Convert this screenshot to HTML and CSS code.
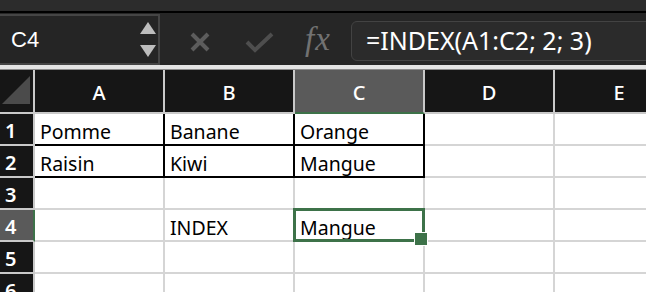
FILE: index.html
```html
<!DOCTYPE html>
<html lang="fr">
<head>
<meta charset="UTF-8">
<meta name="viewport" content="width=device-width, initial-scale=1.0">
<title>Feuille de calcul</title>
<link rel="stylesheet" href="styles.css">
</head>
<body>

<div class="titlebar"></div>

<div class="toolbar">
  <div class="namebox">
    <span class="cellref">C4</span>
    <div class="stepper">
      <svg width="16" height="12" viewBox="0 0 16 12"><polygon points="8,0 16,12 0,12" fill="#bdbdbd"/></svg>
      <svg width="16" height="12" viewBox="0 0 16 12"><polygon points="0,0 16,0 8,12" fill="#bdbdbd"/></svg>
    </div>
  </div>
  <div class="actions">
    <svg class="icon-cancel" width="22" height="22" viewBox="0 0 22 22">
      <path d="M3 3 L19 19 M19 3 L3 19" stroke="#5c5c5c" stroke-width="4" fill="none"/>
    </svg>
    <svg class="icon-enter" width="30" height="22" viewBox="0 0 30 22">
      <path d="M2 11 L10 19 L27 3" stroke="#4e4e4e" stroke-width="4" fill="none"/>
    </svg>
    <span class="fx">fx</span>
  </div>
  <div class="formula">=INDEX(A1:C2; 2; 3)</div>
</div>

<div class="sheet">
  <div class="corner"><svg width="30" height="30" viewBox="0 0 30 30"><polygon points="28,0 28,28 0,28" fill="#4b4b4b"/></svg></div>
  <div class="colhead">A</div>
  <div class="colhead">B</div>
  <div class="colhead active-col">C</div>
  <div class="colhead">D</div>
  <div class="colhead">E</div>

  <div class="rowhead">1</div>
  <div class="cell boxed">Pomme</div>
  <div class="cell boxed">Banane</div>
  <div class="cell boxed">Orange</div>
  <div class="cell"></div>
  <div class="cell"></div>

  <div class="rowhead">2</div>
  <div class="cell boxed">Raisin</div>
  <div class="cell boxed">Kiwi</div>
  <div class="cell boxed">Mangue</div>
  <div class="cell"></div>
  <div class="cell"></div>

  <div class="rowhead">3</div>
  <div class="cell"></div>
  <div class="cell"></div>
  <div class="cell"></div>
  <div class="cell"></div>
  <div class="cell"></div>

  <div class="rowhead active-row">4</div>
  <div class="cell"></div>
  <div class="cell">INDEX</div>
  <div class="cell selected">Mangue</div>
  <div class="cell"></div>
  <div class="cell"></div>

  <div class="rowhead">5</div>
  <div class="cell"></div>
  <div class="cell"></div>
  <div class="cell"></div>
  <div class="cell"></div>
  <div class="cell"></div>

  <div class="rowhead">6</div>
  <div class="cell"></div>
  <div class="cell"></div>
  <div class="cell"></div>
  <div class="cell"></div>
  <div class="cell"></div>
</div>

</body>
</html>
```

FILE: styles.css
```css
/* Reset */
* {
  margin: 0;
  padding: 0;
  box-sizing: border-box;
}

body {
  width: 646px;
  height: 292px;
  overflow: hidden;
  background: #fff;
  font-family: "Noto Sans", "Liberation Sans", sans-serif;
}

/* Window strip above the formula bar */
.titlebar {
  height: 13px;
  background: #2c2c2c;
  border-bottom: 2px solid #000;
}

/* Formula bar */
.toolbar {
  display: flex;
  align-items: center;
  height: 57px;
  background: #262626;
  border-bottom: 1px solid #8c8c8c;
  box-shadow: inset 0 -4px 0 #e4e4e4;
  padding-bottom: 4px;
}

.namebox {
  display: flex;
  align-items: center;
  justify-content: space-between;
  width: 160px;
  height: 51px;
  margin-top: 1px;
  border: 2px solid #454545;
  border-left: none;
  background: #252525;
  padding: 0 2px 0 11px;
}

.cellref {
  color: #fff;
  font-family: "Liberation Sans", Arial, sans-serif;
  font-size: 22px;
}

.stepper {
  display: flex;
  flex-direction: column;
  gap: 11px;
}

.actions {
  display: flex;
  align-items: center;
  width: 191px;
  height: 100%;
  padding-top: 5px;
}

.icon-cancel {
  margin-left: 29px;
}

.icon-enter {
  margin-left: 34px;
}

.fx {
  margin-left: 30px;
  margin-top: -4px;
  color: #727272;
  font-family: "Liberation Serif", serif;
  font-style: italic;
  font-size: 33px;
  letter-spacing: 1px;
}

.formula {
  flex: 1;
  height: 40px;
  margin-top: 3px;
  margin-right: -10px;
  background: #2b2b2b;
  border: 1px solid #434343;
  border-radius: 6px;
  color: #fff;
  font-size: 25px;
  line-height: 37px;
  padding-left: 14px;
}

/* Grid */
.sheet {
  display: grid;
  grid-template-columns: 35px repeat(5, 130px);
  grid-template-rows: 44px repeat(6, 32px);
  width: 685px;
}

.corner,
.colhead,
.rowhead {
  background: #161616;
  color: #fff;
  border-right: 2px solid #c9c9c9;
  border-bottom: 2px solid #c9c9c9;
}

.corner {
  display: flex;
  align-items: center;
  padding-left: 2px;
}

.colhead {
  display: flex;
  align-items: center;
  justify-content: center;
  font-size: 20px;
  font-weight: 500;
  padding-top: 2px;
}

.colhead.active-col {
  background: #5a5a5a;
  border-bottom-color: #3d7249;
}

.rowhead {
  font-size: 20px;
  font-weight: 600;
  line-height: 33px;
  padding-left: 5px;
}

.rowhead.active-row {
  background: #5a5a5a;
  border-right-color: #3d7249;
}

.cell {
  position: relative;
  border-right: 2px solid #d5d5d5;
  border-bottom: 2px solid #d5d5d5;
  font-size: 19.5px;
  line-height: 35px;
  padding-left: 5px;
  color: #000;
}

.cell.boxed {
  border-right-color: #000;
  border-bottom-color: #000;
}

/* Active cell frame and fill handle */
.cell.selected::after {
  content: "";
  position: absolute;
  left: -2px;
  top: -2px;
  right: -2px;
  bottom: -2px;
  border: 3px solid #3d7249;
}

.cell.selected::before {
  content: "";
  position: absolute;
  right: -5px;
  bottom: -6px;
  width: 12px;
  height: 12px;
  background: #3d7249;
  border: 1px solid #fff;
  z-index: 1;
}
```
